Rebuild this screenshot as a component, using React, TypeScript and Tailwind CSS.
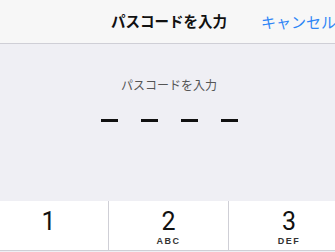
import React from "react";

const jp = { fontFamily: '"Noto Sans CJK JP", "Noto Sans", sans-serif' };

export default function App() {
  const keys = [
    { d: "1", l: "" },
    { d: "2", l: "ABC" },
    { d: "3", l: "DEF" },
  ];
  return (
    <div className="w-[335px] h-[252px] overflow-hidden bg-[#efeff4]" style={jp}>
      <div className="w-[360px] -ml-[11px] flex flex-col">
        <div className="h-[44px] bg-[#f7f7f7] border-b border-[#cfcfd6] grid grid-cols-[1fr_auto_1fr] items-center">
          <div />
          <div className="text-[14.5px] font-bold text-[#111] leading-none">パスコードを入力</div>
          <div className="justify-self-end pr-[13px] text-[15px] text-[#2f86f6] leading-none">キャンセル</div>
        </div>
        <div className="h-[157px] flex flex-col items-center">
          <div className="mt-[33px] text-[12px] text-[#555] leading-[16px]">パスコードを入力</div>
          <div className="mt-[26px] flex gap-[23px]">
            {[0, 1, 2, 3].map((i) => (
              <div key={i} className="w-[17px] h-[3px] bg-[#111]" />
            ))}
          </div>
        </div>
        <div className="grid grid-cols-3 bg-white border-b border-[#cfcfd6] h-[50px]">
          {keys.map((k, i) => (
            <div
              key={k.d}
              className={`flex flex-col items-center pt-[8px] ${i < 2 ? "border-r border-[#cfcfd6]" : ""}`}
            >
              <div className="text-[25px] leading-[26px] text-[#111] font-normal" style={{ fontFamily: '"Roboto", "Liberation Sans", sans-serif' }}>
                {k.d}
              </div>
              <div
                className="text-[9px] font-bold tracking-[1.5px] leading-[12px] text-[#333]"
                style={{ fontFamily: '"Liberation Sans", sans-serif' }}
              >
                {k.l}
              </div>
            </div>
          ))}
        </div>
      </div>
    </div>
  );
}
